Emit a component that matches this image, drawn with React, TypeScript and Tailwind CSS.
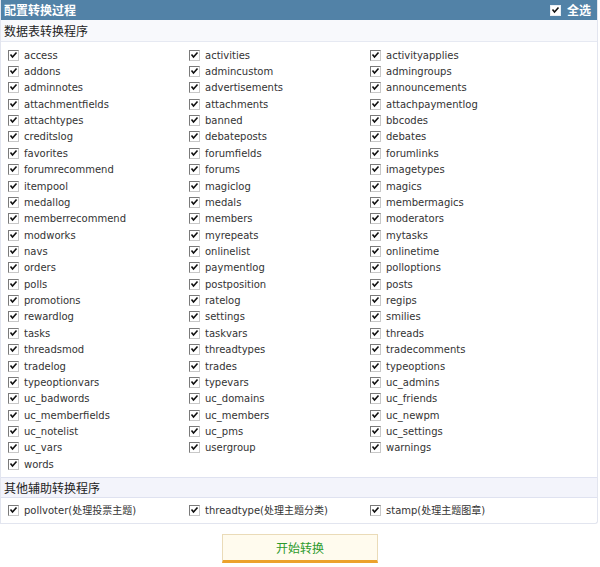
import React from 'react';

const tables = [
    'access', 'activities', 'activityapplies',
    'addons', 'admincustom', 'admingroups',
    'adminnotes', 'advertisements', 'announcements',
    'attachmentfields', 'attachments', 'attachpaymentlog',
    'attachtypes', 'banned', 'bbcodes',
    'creditslog', 'debateposts', 'debates',
    'favorites', 'forumfields', 'forumlinks',
    'forumrecommend', 'forums', 'imagetypes',
    'itempool', 'magiclog', 'magics',
    'medallog', 'medals', 'membermagics',
    'memberrecommend', 'members', 'moderators',
    'modworks', 'myrepeats', 'mytasks',
    'navs', 'onlinelist', 'onlinetime',
    'orders', 'paymentlog', 'polloptions',
    'polls', 'postposition', 'posts',
    'promotions', 'ratelog', 'regips',
    'rewardlog', 'settings', 'smilies',
    'tasks', 'taskvars', 'threads',
    'threadsmod', 'threadtypes', 'tradecomments',
    'tradelog', 'trades', 'typeoptions',
    'typeoptionvars', 'typevars', 'uc_admins',
    'uc_badwords', 'uc_domains', 'uc_friends',
    'uc_memberfields', 'uc_members', 'uc_newpm',
    'uc_notelist', 'uc_pms', 'uc_settings',
    'uc_vars', 'usergroup', 'warnings',
    'words',
];

const extras = ['pollvoter(处理投票主题)', 'threadtype(处理主题分类)', 'stamp(处理主题图章)'];

const cnFont = "font-['Noto_Sans_CJK_SC',sans-serif]";

// old-style checked box: grey sunken frame, small black tick
const Check: React.FC<{ light?: boolean }> = ({ light }) => (
    <span
        className={`inline-flex w-[11px] h-[11px] shrink-0 items-center justify-center border bg-white ${
            light ? 'border-[#e8eef4]' : 'border-t-[#7a7a7a] border-l-[#7a7a7a] border-r-[#c8c8c8] border-b-[#c8c8c8]'
        }`}
    >
        <svg width="9" height="9" viewBox="0 0 9 9">
            <path d="M1.5 3.5 L3.5 6 L7.5 1.5" fill="none" stroke="#111" strokeWidth="1.6" />
        </svg>
    </span>
);

const Item: React.FC<{ label: string }> = ({ label }) => (
    <div className="flex items-center h-[16.36px]">
        <Check />
        <span className="ml-[5px] text-[10px] text-[#333] font-['DejaVu_Sans',sans-serif]">{label}</span>
    </div>
);

export default function App() {
    return (
        <div className="w-[600px] h-[567px] bg-white">
            <div className="w-[598px] border-r border-l border-b border-[#e2e5ef] rounded-br-[3px]">
                <div className={`h-[20px] bg-[#5282a7] flex items-center justify-between pl-[3px] pr-[6px] text-white font-bold text-[12px] ${cnFont}`}>
                    <span>配置转换过程</span>
                    <label className="flex items-center gap-[6px]">
                        <Check light />
                        <span>全选</span>
                    </label>
                </div>
                <div className={`h-[22px] flex items-center pl-[3px] text-[12px] text-[#222] bg-[#f8f9fc] border-b border-[#e6e9f2] ${cnFont}`}>
                    数据表转换程序
                </div>
                <div className="grid grid-cols-[181px_181px_181px] pl-[7px] pt-[5px] pb-[5px]">
                    {tables.map((t) => (
                        <Item key={t} label={t} />
                    ))}
                </div>
                <div className={`h-[21px] flex items-center pl-[3px] text-[12px] text-[#222] bg-[#f3f4fb] border-y border-[#dfe2f0] ${cnFont}`}>
                    其他辅助转换程序
                </div>
                <div className="grid grid-cols-[181px_181px_181px] pl-[7px] h-[25px] items-center">
                    {extras.map((t) => (
                        <div key={t} className="flex items-center">
                            <Check />
                            <span className="ml-[5px] text-[10px] text-[#333] font-['DejaVu_Sans','Noto_Sans_CJK_SC',sans-serif]">{t}</span>
                        </div>
                    ))}
                </div>
            </div>
            <div className="flex justify-center pt-[10px]">
                <button
                    className={`w-[156px] h-[29px] bg-[#fffbee] border border-[#eadbb8] border-b-[3px] border-b-[#eca22c] text-[12px] text-[#2c9a2c] ${cnFont}`}
                >
                    开始转换
                </button>
            </div>
        </div>
    );
}
